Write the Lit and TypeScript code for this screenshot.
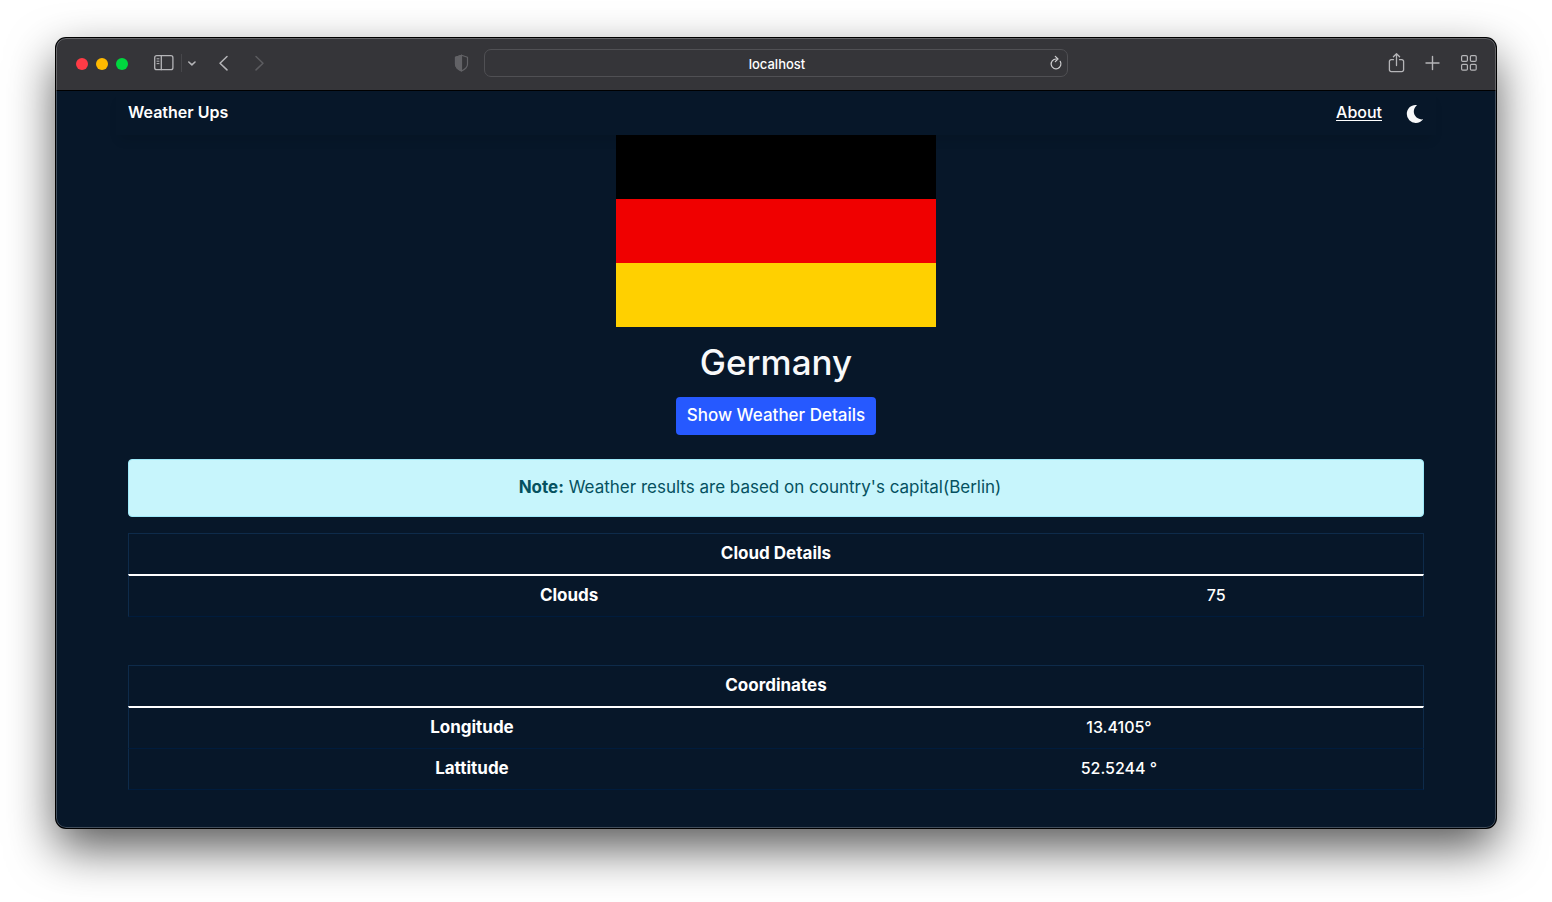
import { LitElement, html, css, svg } from "lit";
import { customElement, property } from "lit/decorators.js";

interface Row {
  label: string;
  value: string;
}

@customElement("browser-toolbar")
class BrowserToolbar extends LitElement {
  static styles = css`
    :host {
      display: block;
    }
    .bar {
      display: grid;
      grid-template-columns: minmax(0, 1fr) 40.5% minmax(0, 1fr);
      align-items: center;
      height: 50px;
      padding-bottom: 2px;
      background: #353539;
      border-bottom: 1px solid #000;
    }
    .side {
      display: flex;
      align-items: center;
    }
    .left {
      padding: 0 15px 0 20px;
    }
    .right {
      justify-content: flex-end;
      gap: 19px;
      padding-right: 18px;
    }
    .lights {
      display: flex;
      gap: 8px;
      margin-right: 25px;
      padding-top: 2px;
    }
    .light {
      width: 12px;
      height: 12px;
      border-radius: 50%;
    }
    .red {
      background: #ff3b46;
    }
    .yellow {
      background: #ffba00;
    }
    .green {
      background: #00d73f;
    }
    button {
      display: flex;
      padding: 0;
      border: 0;
      background: none;
      color: #b5b5b8;
    }
    svg {
      display: block;
      fill: none;
      stroke: currentColor;
      stroke-linecap: round;
      stroke-linejoin: round;
    }
    .divider {
      width: 1px;
      height: 18px;
      margin: 0 4px 0 6px;
      background: #47474b;
    }
    .back {
      margin-left: 18px;
    }
    .forward {
      margin-left: 20px;
      color: #5c5c60;
    }
    .shield {
      margin-left: auto;
      color: #626266;
    }
    .address {
      display: flex;
      align-items: center;
      box-sizing: border-box;
      height: 28px;
      padding: 0 4px 0 20px;
      border: 1px solid #505054;
      border-radius: 7px;
    }
    .address input {
      flex: 1;
      min-width: 0;
      padding: 2px 0 0;
      border: 0;
      outline: 0;
      background: none;
      color: #fff;
      text-align: center;
      font: 500 13px/20px Inter, "Liberation Sans", sans-serif;
    }
    .reload {
      color: #d0d0d2;
    }
  `;

  render() {
    return html`
      <div class="bar">
        <div class="side left">
          <div class="lights">
            <span class="light red"></span>
            <span class="light yellow"></span>
            <span class="light green"></span>
          </div>
          <button aria-label="Sidebar">
            <svg width="22" height="20" viewBox="0 0 22 20" stroke-width="1.3">
              <rect x="1.7" y="2.7" width="18.2" height="14" rx="2" />
              <path d="M8.3 2.7v14" />
              <path d="M4 5.8h2M4 8.2h2M4 10.6h2" stroke-width="1" />
            </svg>
          </button>
          <span class="divider"></span>
          <button aria-label="Tab groups">
            <svg width="12" height="12" viewBox="0 0 12 12" stroke-width="1.6">
              <path d="M2.8 5l3.1 2.8L9 5" />
            </svg>
          </button>
          <button class="back" aria-label="Back">
            <svg width="16" height="20" viewBox="0 0 16 20" stroke-width="1.5">
              <path d="M11 3.5L4 10.2l7 6.7" />
            </svg>
          </button>
          <button class="forward" aria-label="Forward">
            <svg width="16" height="20" viewBox="0 0 16 20" stroke-width="1.5">
              <path d="M4 3.5l7 6.7L4 16.9" />
            </svg>
          </button>
          <button class="shield" aria-label="Privacy report">
            <svg width="15" height="18" viewBox="0 0 15 18" stroke-width="1.2">
              <path d="M7.5 1.2l6 2.1v7c0 3-2.7 5.1-6 6.7-3.3-1.6-6-3.7-6-6.7v-7z" />
              <path d="M7.5 1.2v15.800c-3.3-1.6-6-3.7-6-6.7v-7z" fill="currentColor" />
            </svg>
          </button>
        </div>
        <div class="address">
          <input type="text" aria-label="Address" value="localhost" />
          <button class="reload" aria-label="Reload">
            <svg width="14" height="16" viewBox="0 0 14 16" stroke-width="1.2">
              <path d="M11.2 6.3A4.9 4.9 0 1 1 7 4h1.2" />
              <path d="M6.3 1.4L9 4 6.3 6.6" />
            </svg>
          </button>
        </div>
        <div class="side right">
          <button aria-label="Share">
            <svg width="17" height="22" viewBox="0 0 17 22" stroke-width="1.3">
              <path d="M5.5 7.7H3.2a1.8 1.8 0 0 0-1.8 1.8v8.3a1.8 1.8 0 0 0 1.8 1.8h10.6a1.8 1.8 0 0 0 1.8-1.8V9.5a1.8 1.8 0 0 0-1.8-1.8h-2.3" />
              <path d="M8.5 13.5V2M5.4 4.8L8.5 1.7l3.1 3.1" />
            </svg>
          </button>
          <button aria-label="New tab">
            <svg width="17" height="18" viewBox="0 0 17 18" stroke-width="1.4">
              <path d="M8.5 2.5v13M2 9h13" />
            </svg>
          </button>
          <button aria-label="Tab overview">
            <svg width="18" height="18" viewBox="0 0 18 18" stroke-width="1.2">
              ${[1.6, 10.4].map((x) =>
                [1.6, 10.4].map(
                  (y) => svg`<rect x=${x} y=${y} width="5.8" height="5.8" rx="1.2" />`
                )
              )}
            </svg>
          </button>
        </div>
      </div>
    `;
  }
}

@customElement("detail-table")
class DetailTable extends LitElement {
  @property() heading = "";
  @property({ type: Number }) split = 50;
  @property({ attribute: false }) rows: Row[] = [];

  static styles = css`
    :host {
      display: block;
    }
    table {
      width: 100%;
      border-collapse: separate;
      border-spacing: 0;
      table-layout: fixed;
      border: 0 solid #0e2b4a;
      border-width: 1px 0 0;
      color: #fff;
      text-align: center;
    }
    th,
    td {
      padding: 7px 8px 9px;
      border: 0 solid #0e2b4a;
      line-height: 24px;
    }
    th {
      font-size: 17px;
      font-weight: 700;
    }
    td {
      font-weight: 500;
    }
    thead th {
      border-width: 0 1px;
    }
    thead tr:last-child th {
      border-bottom: 0;
    }
    tbody th,
    tbody td {
      border-bottom: 1px solid #001c3d;
    }
    tbody th {
      border-left-width: 1px;
    }
    tbody td {
      border-right-width: 1px;
    }
    tbody tr:first-child > * {
      border-top: 2px solid #fff;
    }
  `;

  render() {
    return html`
      <table>
        <colgroup>
          <col style="width:${this.split}%" />
          <col />
        </colgroup>
        <thead>
          <tr>
            <th colspan="2" scope="colgroup">${this.heading}</th>
          </tr>
        </thead>
        <tbody>
          ${this.rows.map(
            (r) => html`<tr>
              <th scope="row">${r.label}</th>
              <td>${r.value}</td>
            </tr>`
          )}
        </tbody>
      </table>
    `;
  }
}

@customElement("app-root")
class AppRoot extends LitElement {
  static styles = css`
    :host {
      display: flex;
      box-sizing: border-box;
      min-height: 100vh;
      padding: 38px 56px 74px;
      background: #fff;
      font: 400 16px/24px Inter, "Liberation Sans", sans-serif;
    }
    .window {
      position: relative;
      flex: 1;
      min-width: 0;
      overflow: hidden;
      border-radius: 10px;
      background: #071729;
      box-shadow: 0 0 0 1px #000, 0 20px 48px rgba(0, 0, 0, 0.66);
    }
    /* thin light rim over the window edge */
    .window::after {
      content: "";
      position: absolute;
      inset: 0;
      border: 1px solid rgba(255, 255, 255, 0.24);
      border-radius: 10px;
      pointer-events: none;
    }
    .page {
      max-width: 1320px;
      margin: 0 auto;
    }
    .nav {
      display: flex;
      align-items: center;
      box-sizing: border-box;
      height: 44px;
      padding: 0 12px 2px;
      box-shadow: 0 8px 12px -4px rgba(0, 0, 0, 0.12);
      color: #fff;
    }
    .brand {
      margin-right: auto;
      font-weight: 600;
    }
    .about {
      margin-right: 24px;
      color: #fff;
      font-weight: 500;
      text-underline-offset: 2px;
    }
    .theme {
      display: flex;
      padding: 4px 0 0;
      border: 0;
      background: none;
      color: #f8f9fa;
    }
    main {
      display: flex;
      flex-direction: column;
      align-items: center;
      padding: 0 12px 37px;
    }
    .flag {
      display: block;
      position: relative;
      width: 320px;
      height: 192px;
    }
    h1 {
      margin: 16px 0;
      color: #f8f9fa;
      font-size: 35px;
      line-height: 38px;
      font-weight: 500;
    }
    .details {
      min-width: 200px;
      height: 38px;
      padding: 0 11px 2px;
      border: 0;
      border-radius: 4px;
      background: #2659ff;
      color: #fff;
      font: inherit;
      font-size: 17px;
      font-weight: 500;
    }
    .note {
      align-self: stretch;
      margin: 24px 0 16px;
      padding: 15px 48px 17px 16px;
      border: 1px solid #9eeaf9;
      border-radius: 4px;
      background: #c7f5fc;
      color: #055160;
      font-size: 17px;
      text-align: center;
    }
    detail-table {
      align-self: stretch;
    }
    detail-table + detail-table {
      margin-top: 48px;
    }
  `;

  render() {
    return html`
      <div class="window">
        <browser-toolbar></browser-toolbar>
        <div class="page">
          <nav class="nav">
            <span class="brand">Weather Ups</span>
            <a class="about" href="#about">About</a>
            <button class="theme" aria-label="Dark mode">
              <svg width="18" height="20" viewBox="0 0 18 20" fill="currentColor">
                <path d="M11 1.2C7.7 3.6 6.9 8 9 11.6c1.8 3 5 4.3 8.2 3.7A9.3 9.3 0 0 1 9.6 19 8.9 8.9 0 0 1 .8 10C.8 4.6 5.5.3 11 1.2z" />
              </svg>
            </button>
          </nav>
          <main>
            <svg class="flag" viewBox="0 0 5 3" preserveAspectRatio="none" role="img" aria-label="Flag of Germany">
              <rect width="5" height="3" fill="#000" />
              <rect width="5" height="2" y="1" fill="#f00000" />
              <rect width="5" height="1" y="2" fill="#ffd000" />
            </svg>
            <h1>Germany</h1>
            <button class="details">Show Weather Details</button>
            <div class="note" role="alert">
              <strong>Note:</strong> Weather results are based on country's capital(Berlin)
            </div>
            <detail-table
              heading="Cloud Details"
              split="68"
              .rows=${[{ label: "Clouds", value: "75" }]}
            ></detail-table>
            <detail-table
              heading="Coordinates"
              split="53"
              .rows=${[
                { label: "Longitude", value: "13.4105°" },
                { label: "Lattitude", value: "52.5244 °" },
              ]}
            ></detail-table>
          </main>
        </div>
      </div>
    `;
  }
}
